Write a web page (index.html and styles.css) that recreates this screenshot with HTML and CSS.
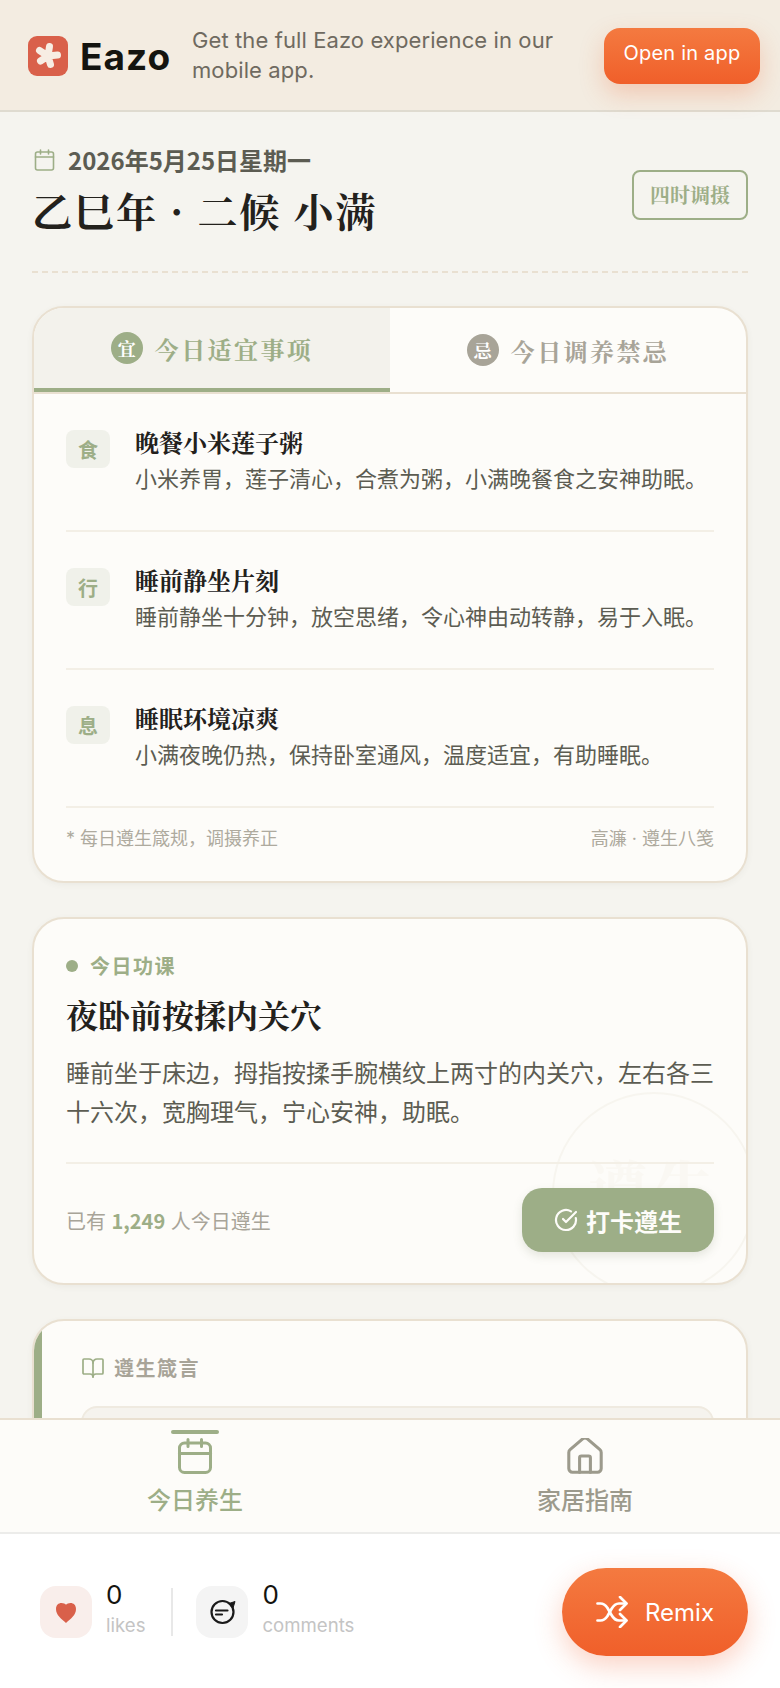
FILE: index.html
```html
<!DOCTYPE html>
<html lang="zh-CN">
<head>
  <meta charset="UTF-8" />
  <meta name="viewport" content="width=device-width, initial-scale=1.0"/>
  <title>今日养生</title>
  <link rel="stylesheet" href="styles.css">
</head>
<body>
<div class="app">

  <header class="banner">
    <div class="logo">
      <svg class="logo-mark" viewBox="0 0 40 40">
        <rect width="40" height="40" rx="9" fill="#d9604a"/>
        <path d="M20 20 21.500 10.500M20 20 29.500 19M20 20 22.500 28.500M20 20 12.500 25M20 20 11.500 14.500" stroke="#f7ede3" stroke-width="7" stroke-linecap="round" fill="none"/>
      </svg>
      <span class="logo-text">Eazo</span>
    </div>
    <p class="banner-text">Get the full Eazo experience in our mobile app.</p>
    <button class="open-btn">Open in app</button>
  </header>

  <main class="main">
    <section class="head">
      <div>
        <div class="date">
          <svg class="date-icon" viewBox="0 0 20 22" fill="none" stroke="#9dae87" stroke-width="1.6" stroke-linecap="round"><path d="M6 1v4M14 1v4"/><rect x="1" y="3" width="18" height="18" rx="2"/><path d="M1 8h18"/></svg>
          <span>2026年5月25日星期一</span>
        </div>
        <h1 class="title">乙巳年 · 二候 小满</h1>
      </div>
      <div class="tag">四时调摄</div>
    </section>

    <section class="card list-card">
      <div class="tabs">
        <div class="tab tab-on"><span class="tab-badge">宜</span><span>今日适宜事项</span></div>
        <div class="tab"><span class="tab-badge">忌</span><span>今日调养禁忌</span></div>
      </div>
      <div class="list">
        <div class="item">
          <span class="item-icon">食</span>
          <div>
            <h3 class="item-title">晚餐小米莲子粥</h3>
            <p class="item-desc">小米养胃，莲子清心，合煮为粥，小满晚餐食之安神助眠。</p>
          </div>
        </div>
        <div class="item">
          <span class="item-icon">行</span>
          <div>
            <h3 class="item-title">睡前静坐片刻</h3>
            <p class="item-desc">睡前静坐十分钟，放空思绪，令心神由动转静，易于入眠。</p>
          </div>
        </div>
        <div class="item">
          <span class="item-icon">息</span>
          <div>
            <h3 class="item-title">睡眠环境凉爽</h3>
            <p class="item-desc">小满夜晚仍热，保持卧室通风，温度适宜，有助睡眠。</p>
          </div>
        </div>
        <div class="list-foot">
          <span>* 每日遵生箴规，调摄养正</span>
          <span>高濂 · 遵生八笺</span>
        </div>
      </div>
    </section>

    <section class="card lesson">
      <div class="seal"><span>遵生</span></div>
      <div class="lesson-label"><i class="dot"></i>今日功课</div>
      <h2 class="lesson-title">夜卧前按揉内关穴</h2>
      <p class="lesson-desc">睡前坐于床边，拇指按揉手腕横纹上两寸的内关穴，左右各三十六次，宽胸理气，宁心安神，助眠。</p>
      <div class="lesson-foot">
        <span class="count">已有 <b>1,249</b> 人今日遵生</span>
        <button class="check-btn">
          <svg viewBox="0 0 24 24" fill="none" stroke="currentColor" stroke-width="2.2" stroke-linecap="round" stroke-linejoin="round"><path d="M21.801 10A10 10 0 1 1 17 3.335"/><path d="m9 11 3 3L22 4"/></svg>
          打卡遵生
        </button>
      </div>
    </section>

    <section class="card quote">
      <div class="quote-label">
        <svg viewBox="0 0 24 24" fill="none" stroke="#9dae87" stroke-width="1.7" stroke-linecap="round" stroke-linejoin="round"><path d="M12 7v14"/><path d="M3 18a1 1 0 0 1-1-1V4a1 1 0 0 1 1-1h5a4 4 0 0 1 4 4 4 4 0 0 1 4-4h5a1 1 0 0 1 1 1v13a1 1 0 0 1-1 1h-6a3 3 0 0 0-3 3 3 3 0 0 0-3-3z"/></svg>
        遵生箴言
      </div>
      <div class="quote-box"></div>
    </section>
  </main>

  <nav class="nav">
    <div class="nav-item nav-on">
      <i class="nav-bar"></i>
      <svg viewBox="0 0 34 36" fill="none" stroke="currentColor" stroke-width="3" stroke-linecap="round" stroke-linejoin="round"><path d="M10 1.500v7M23.500 1.500v7"/><rect x="1.500" y="5" width="31" height="29.500" rx="5"/><path d="M1.500 15.500h31"/></svg>
      <span>今日养生</span>
    </div>
    <div class="nav-item">
      <svg viewBox="2 2 20 20" fill="none" stroke="currentColor" stroke-width="1.7" stroke-linecap="round" stroke-linejoin="round"><path d="M15 21v-8a1 1 0 0 0-1-1h-4a1 1 0 0 0-1 1v8"/><path d="M3 10a2 2 0 0 1 .709-1.528l7-5.999a2 2 0 0 1 2.582 0l7 5.999A2 2 0 0 1 21 10v9a2 2 0 0 1-2 2H5a2 2 0 0 1-2-2z"/></svg>
      <span>家居指南</span>
    </div>
  </nav>

  <footer class="social">
    <div class="stat">
      <span class="stat-icon like">
        <svg viewBox="0 0 24 24" fill="#d9604a"><path d="M12 23C7 18.500 2 15 2 9 2 5 4.500 3 7.500 3 9.500 3 11 3.800 12 4.800 13 3.800 14.500 3 16.500 3 19.500 3 22 5 22 9 22 15 17 18.500 12 23z"/></svg>
      </span>
      <div class="stat-text"><b>0</b><small>likes</small></div>
    </div>
    <i class="stat-line"></i>
    <div class="stat">
      <span class="stat-icon">
        <svg viewBox="0 0 28 28" fill="none" stroke="#1a1a1a" stroke-width="2.2" stroke-linecap="round" stroke-linejoin="round"><circle cx="14.500" cy="14" r="11"/><path d="M21 5.500 27 3.500 25 10z" fill="#1a1a1a" stroke-width="1"/><path d="M8 12.500h11.500M8 16.500h6"/></svg>
      </span>
      <div class="stat-text"><b>0</b><small>comments</small></div>
    </div>
    <button class="remix-btn">
      <svg viewBox="0 0 32 32" fill="none" stroke="currentColor" stroke-width="2.700" stroke-linecap="round" stroke-linejoin="round"><path d="M1.500 7.500h3c3 0 5 1.500 7 4.500l4 7c2 3.500 4 5.500 7.500 5.500h7"/><path d="M1.500 24.500h3c3 0 5-1.500 7-4.500l4-7c2-3.500 4-5.500 7.500-5.500h7"/><path d="M24 1l6.500 6.500L24 14"/><path d="M24 18l6.500 6.500L24 31"/></svg>
      Remix
    </button>
  </footer>

</div>
</body>
</html>
```

FILE: styles.css
```css
* {
  box-sizing: border-box;
}
html, body {
  margin: 0;
  height: 100%;
  overflow: hidden;
}
body {
  font-family: "Noto Sans CJK SC", sans-serif;
  background: #fff;
  color: #23211c;
}
h1, h2, h3, p {
  margin: 0;
}
button {
  border: 0;
  font-family: inherit;
}

.app {
  height: 1688px;
  display: flex;
  flex-direction: column;
}

/* top banner */
.banner {
  height: 112px;
  flex: none;
  display: flex;
  align-items: center;
  padding: 2px 20px 0 28px;
  background: #f3ece1;
  border-bottom: 2px solid #dfdbd0;
  position: relative;
  z-index: 2;
  font-family: Inter, sans-serif;
}
.logo {
  display: flex;
  align-items: center;
  gap: 12px;
  width: 164px;
  flex: none;
}
.logo-mark {
  width: 40px;
  height: 40px;
}
.logo-text {
  font-size: 37px;
  font-weight: 700;
  color: #14140f;
  letter-spacing: 1px;
}
.banner-text {
  width: 372px;
  margin-top: -2px;
  font-size: 22px;
  line-height: 30px;
  letter-spacing: 0.1px;
  color: #6f6a60;
}
.open-btn {
  margin-left: auto;
  width: 156px;
  height: 56px;
  padding: 0 0 6px;
  border-radius: 16px;
  background: linear-gradient(180deg, #f47a40, #f05f2a);
  color: #fff;
  font-size: 20px;
  letter-spacing: 0.2px;
  box-shadow: 0 10px 24px rgba(240, 95, 42, 0.25);
}

/* scrolling part */
.main {
  flex: 1;
  min-height: 0;
  overflow: hidden;
  background: #f5f4ef;
  padding: 0 32px;
}
.head {
  display: flex;
  justify-content: space-between;
  align-items: center;
  height: 161px;
  padding-bottom: 4px;
  border-bottom: 2px dashed #e9e0d1;
}
.date {
  display: flex;
  align-items: center;
  gap: 13px;
  font-size: 24px;
  font-weight: 700;
  line-height: 32px;
  color: #5c5c52;
}
.date-icon {
  width: 21px;
  height: 22px;
  margin-left: 2px;
}
.title {
  font-family: "Noto Serif CJK SC", "Liberation Serif", serif;
  font-size: 40px;
  font-weight: 700;
  line-height: 52px;
  margin-top: 8px;
  letter-spacing: 2px;
  color: #23211c;
}
.tag {
  width: 116px;
  height: 50px;
  display: flex;
  align-items: center;
  justify-content: center;
  margin-top: 10px;
  border: 2px solid #9dae87;
  border-radius: 8px;
  font-family: "Noto Serif CJK SC", "Liberation Serif", serif;
  font-size: 20px;
  font-weight: 700;
  color: #9dae87;
}

/* cards */
.card {
  position: relative;
  overflow: hidden;
  background: #fdfcf9;
  border: 2px solid #e9e0d1;
  border-radius: 32px;
  box-shadow: 0 2px 6px rgba(90, 80, 60, 0.06);
}
.list-card {
  height: 577px;
  margin-top: 33px;
}
.tabs {
  display: flex;
  height: 86px;
  border-bottom: 2px solid #e9e0d1;
}
.tab {
  flex: 1;
  display: flex;
  align-items: center;
  justify-content: center;
  gap: 12px;
  font-family: "Noto Serif CJK SC", "Liberation Serif", serif;
  font-size: 24px;
  font-weight: 700;
  letter-spacing: 2.4px;
  color: #a8a498;
}
.tab-on {
  background: #f3f2ec;
  border-bottom: 4px solid #9dae87;
  color: #9dae87;
}
.tab-badge {
  width: 32px;
  height: 32px;
  border-radius: 50%;
  display: flex;
  align-items: center;
  justify-content: center;
  background: #a8a498;
  color: #fff;
  font-size: 18px;
  letter-spacing: 0;
}
.tab-on .tab-badge {
  background: #9dae87;
}
.list {
  padding: 0 32px;
}
.item {
  height: 138px;
  display: flex;
  gap: 25px;
  padding-top: 36px;
  border-bottom: 2px solid #f3efe6;
}
.item-icon {
  width: 44px;
  height: 38px;
  flex: none;
  display: flex;
  align-items: center;
  justify-content: center;
  background: #f0f1ea;
  border-radius: 8px;
  font-size: 20px;
  font-weight: 700;
  color: #9dae87;
}
.item-title {
  font-family: "Noto Serif CJK SC", "Liberation Serif", serif;
  font-size: 24px;
  font-weight: 700;
  line-height: 32px;
  margin-top: -4px;
  color: #23211c;
}
.item-desc {
  font-size: 22px;
  line-height: 34px;
  margin-top: 2px;
  white-space: nowrap;
  color: #5c5c52;
}
.list-foot {
  display: flex;
  justify-content: space-between;
  padding-top: 18px;
  font-family: Inter, "Noto Sans CJK SC", sans-serif;
  font-size: 18px;
  line-height: 26px;
  color: #aeaa9e;
}

/* lesson card */
.lesson {
  height: 368px;
  margin-top: 34px;
  padding: 32px;
}
.lesson > * {
  position: relative;
}
.lesson .seal {
  position: absolute;
  left: 518px;
  top: 173px;
  width: 204px;
  height: 204px;
  border: 2px solid #f7f5ef;
  border-radius: 50%;
  display: flex;
  justify-content: center;
  padding-top: 48px;
  font-family: "Noto Serif CJK SC", "Liberation Serif", serif;
  font-size: 60px;
  font-weight: 700;
  letter-spacing: 6px;
  color: #faf8f3;
}
.lesson-label {
  display: flex;
  align-items: center;
  gap: 12px;
  font-size: 20px;
  font-weight: 700;
  line-height: 30px;
  letter-spacing: 1.5px;
  color: #9dae87;
}
.dot {
  width: 12px;
  height: 12px;
  border-radius: 50%;
  background: #9dae87;
}
.lesson-title {
  font-family: "Noto Serif CJK SC", "Liberation Serif", serif;
  font-size: 32px;
  font-weight: 700;
  line-height: 44px;
  margin-top: 11px;
  color: #23211c;
}
.lesson-desc {
  font-size: 24px;
  line-height: 39px;
  margin-top: 16px;
  color: #5c5c52;
}
.lesson-foot {
  display: flex;
  justify-content: space-between;
  align-items: center;
  margin-top: 32px;
  padding-top: 24px;
  border-top: 2px solid #f3efe6;
}
.count {
  font-size: 20px;
  word-spacing: 1px;
  color: #a8a498;
}
.count b {
  color: #9dae87;
}
.check-btn {
  width: 192px;
  height: 64px;
  display: flex;
  align-items: center;
  justify-content: center;
  gap: 8px;
  border-radius: 20px;
  background: #9dae87;
  color: #fdfcf9;
  font-size: 24px;
  font-weight: 700;
  box-shadow: 0 4px 10px rgba(90, 100, 70, 0.15);
}
.check-btn svg {
  width: 24px;
  height: 24px;
}

/* cut off by the nav */
.quote {
  height: 400px;
  margin-top: 34px;
  padding: 29px 32px 0 47px;
}
.quote::before {
  content: "";
  position: absolute;
  left: 0;
  top: 0;
  bottom: 0;
  width: 8px;
  background: #9dae87;
}
.quote-label {
  display: flex;
  align-items: center;
  gap: 9px;
  font-size: 20px;
  font-weight: 700;
  line-height: 36px;
  letter-spacing: 1.5px;
  color: #a8a498;
}
.quote-label svg {
  width: 24px;
  height: 24px;
}
.quote-box {
  height: 200px;
  margin-top: 20px;
  background: #f5f3ee;
  border: 2px solid #efeae0;
  border-radius: 16px;
}

/* tab bar */
.nav {
  height: 116px;
  flex: none;
  display: flex;
  background: #fdfcf9;
  border-top: 2px solid #e9e0d1;
  border-bottom: 2px solid #ececea;
}
.nav-item {
  flex: 1;
  position: relative;
  display: flex;
  flex-direction: column;
  align-items: center;
  padding-top: 18px;
  color: #9c9a8c;
  font-size: 24px;
  font-weight: 500;
}
.nav-item svg {
  width: 36px;
  height: 36px;
}
.nav-item span {
  line-height: 34px;
  margin-top: 8px;
}
.nav-on {
  color: #9dae87;
}
.nav-bar {
  position: absolute;
  top: 10px;
  width: 48px;
  height: 4px;
  border-radius: 2px;
  background: #9dae87;
}

/* bottom bar */
.social {
  height: 154px;
  flex: none;
  display: flex;
  align-items: center;
  padding: 2px 32px 0 40px;
  background: #fff;
  font-family: Inter, sans-serif;
}
.stat {
  display: flex;
  align-items: center;
  gap: 14px;
}
.stat-icon {
  width: 52px;
  height: 52px;
  display: flex;
  align-items: center;
  justify-content: center;
  border-radius: 16px;
  background: #f4f4f4;
}
.stat-icon svg {
  width: 28px;
  height: 28px;
}
.like {
  background: #f9eeeb;
}
.like svg {
  width: 24px;
  height: 24px;
}
.stat-text {
  display: flex;
  flex-direction: column;
  margin-bottom: 6px;
}
.stat-text b {
  font-size: 26px;
  font-weight: 400;
  line-height: 32px;
  color: #14140f;
}
.stat-text small {
  font-size: 18.6px;
  line-height: 28px;
  color: #c4c4c4;
}
.stat-line {
  width: 2px;
  height: 48px;
  margin: 0 23px 0 26px;
  background: #e8e8e8;
}
.remix-btn {
  margin-left: auto;
  width: 186px;
  height: 88px;
  display: flex;
  align-items: center;
  justify-content: center;
  gap: 17px;
  border-radius: 44px;
  background: linear-gradient(180deg, #f47a40, #f05f2a);
  color: #fff;
  font-size: 24px;
  box-shadow: 0 10px 28px rgba(240, 95, 42, 0.28);
}
.remix-btn svg {
  width: 32px;
  height: 32px;
}
```
